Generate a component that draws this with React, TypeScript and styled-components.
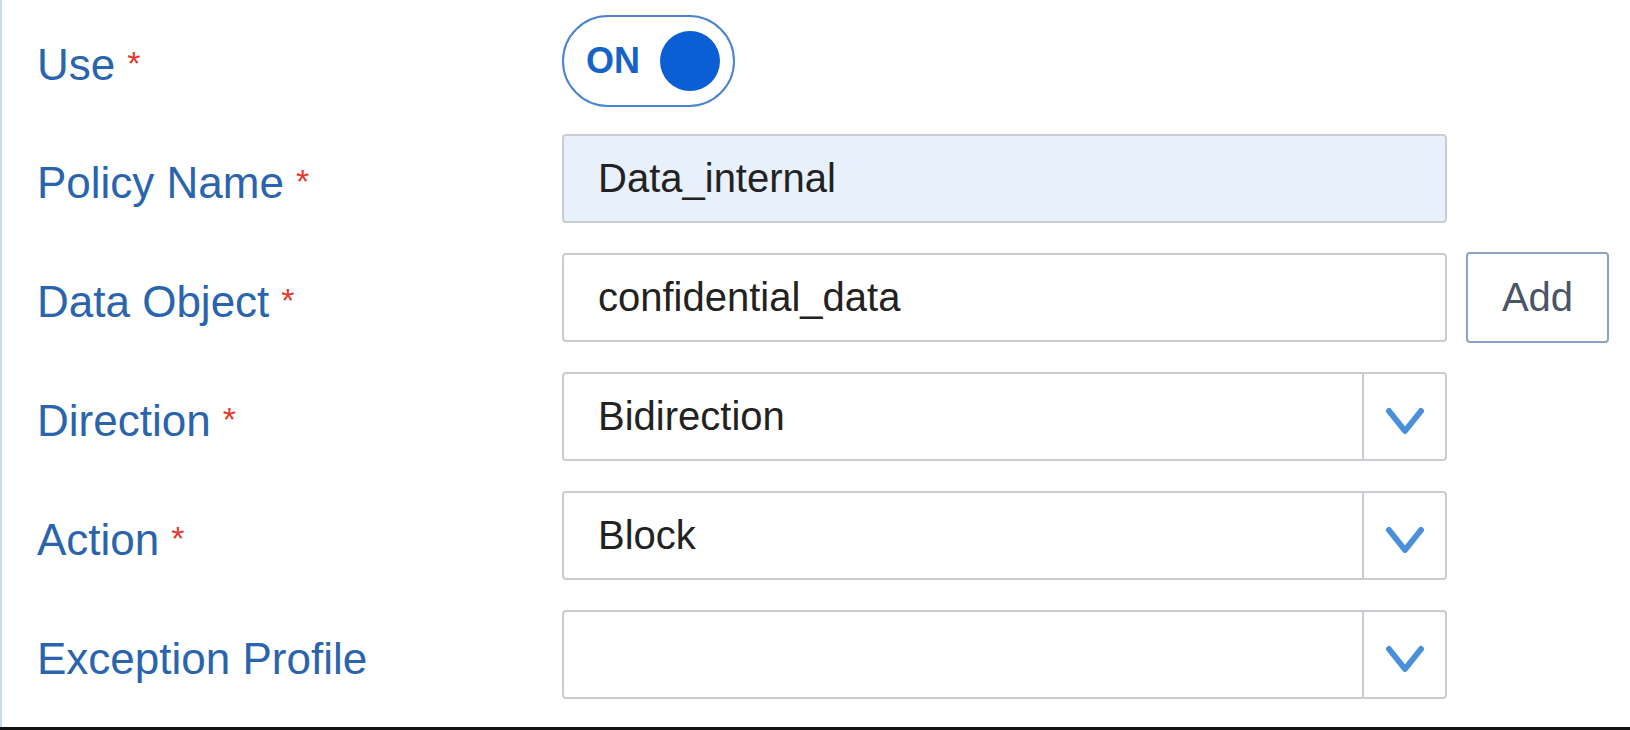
import React from 'react';
import styled, {createGlobalStyle} from 'styled-components';

const GlobalStyle = createGlobalStyle`
  html, body {
    margin: 0;
    padding: 0;
    background: #fff;
  }
  body {
    font-family: "Liberation Sans", Arial, sans-serif;
  }
`;

const Page = styled.div`
  width: 1630px;
  height: 730px;
  box-sizing: border-box;
  border-bottom: 3px solid #111;
  overflow: hidden;
`;

const Panel = styled.div`
  height: 727px;
  box-sizing: border-box;
  border-left: 2px solid #c6daf1;
  padding: 15px 0 0 35px;
  display: flex;
  flex-direction: column;
  gap: 30px;
`;

const Row = styled.div<{$tall?: boolean}>`
  display: flex;
  align-items: center;
  height: ${(p) => (p.$tall ? 92 : 89)}px;
  margin-bottom: ${(p) => (p.$tall ? -3 : 0)}px;
`;

const Label = styled.div`
  width: 525px;
  flex-shrink: 0;
  padding-top: 8px;
  font-size: 44px;
  color: #2a64ad;
  white-space: nowrap;
`;

const Required = styled.span`
  font-size: 34px;
  color: #e53b2f;
  margin-left: 12px;
  vertical-align: 5px;
`;

const Toggle = styled.div`
  width: 173px;
  height: 92px;
  box-sizing: border-box;
  border: 2px solid #4a84cf;
  border-radius: 46px;
  display: flex;
  align-items: center;
  justify-content: space-between;
  padding: 0 13px 0 22px;
`;

const ToggleText = styled.span`
  font-size: 36px;
  font-weight: bold;
  color: #1662c9;
`;

const Knob = styled.span`
  width: 60px;
  height: 60px;
  border-radius: 50%;
  background: #0b5fd4;
`;

const Field = styled.div<{$filled?: boolean}>`
  width: 885px;
  height: 100%;
  box-sizing: border-box;
  border: 2px solid #c9cdd2;
  border-radius: 4px;
  background: ${(p) => (p.$filled ? '#e8f0fc' : '#fff')};
  display: flex;
  align-items: center;
  font-size: 40px;
  color: #222;
`;

const Value = styled.span`
  flex: 1;
  padding-left: 34px;
`;

const ChevronCell = styled.span`
  width: 83px;
  height: 100%;
  box-sizing: border-box;
  border-left: 2px solid #c9cdd2;
  padding-top: 8px;
  display: flex;
  align-items: center;
  justify-content: center;
`;

const AddButton = styled.button`
  margin-left: 19px;
  width: 143px;
  height: 91px;
  box-sizing: border-box;
  border: 2px solid #8ea2c5;
  border-radius: 4px;
  background: #fff;
  font-family: inherit;
  font-size: 40px;
  color: #4a5566;
  padding: 0;
`;

const Chevron = () => (
  <svg width="42" height="32" viewBox="0 0 42 32">
    <polyline
      points="5,6 21,26 37,6"
      fill="none"
      stroke="#4a8fdc"
      strokeWidth="6"
      strokeLinecap="round"
      strokeLinejoin="round"
    />
  </svg>
);

const Select: React.FC<{value: string}> = ({value}) => (
  <Field>
    <Value>{value}</Value>
    <ChevronCell>
      <Chevron />
    </ChevronCell>
  </Field>
);

const FieldLabel: React.FC<{text: string; required?: boolean}> = ({text, required}) => (
  <Label>
    {text}
    {required && <Required>*</Required>}
  </Label>
);

const App: React.FC = () => {
  return (
    <>
      <GlobalStyle />
      <Page>
        <Panel>
          <Row $tall>
            <FieldLabel text="Use" required />
            <Toggle>
              <ToggleText>ON</ToggleText>
              <Knob />
            </Toggle>
          </Row>
          <Row>
            <FieldLabel text="Policy Name" required />
            <Field $filled>
              <Value>Data_internal</Value>
            </Field>
          </Row>
          <Row>
            <FieldLabel text="Data Object" required />
            <Field>
              <Value>confidential_data</Value>
            </Field>
            <AddButton>Add</AddButton>
          </Row>
          <Row>
            <FieldLabel text="Direction" required />
            <Select value="Bidirection" />
          </Row>
          <Row>
            <FieldLabel text="Action" required />
            <Select value="Block" />
          </Row>
          <Row>
            <FieldLabel text="Exception Profile" />
            <Select value="" />
          </Row>
        </Panel>
      </Page>
    </>
  );
};

export default App;
